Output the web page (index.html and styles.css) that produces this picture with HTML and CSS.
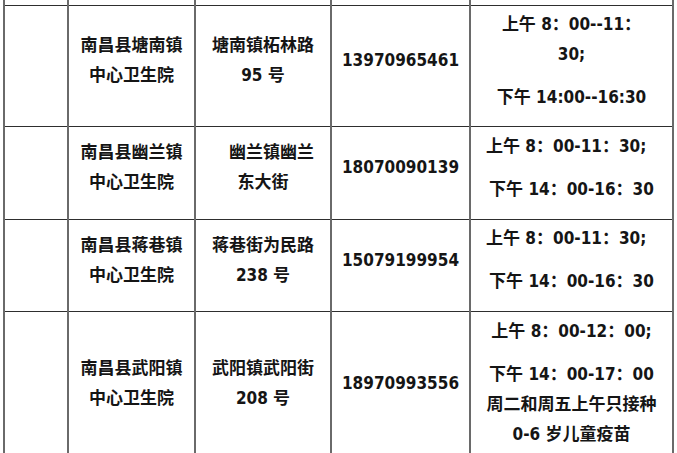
FILE: index.html
```html
<!DOCTYPE html>
<html lang="zh-CN">
<head>
<meta charset="utf-8">
<title>卫生院接种时间</title>
<link rel="stylesheet" href="styles.css">
</head>
<body>
<table class="grid">
  <colgroup>
    <col class="c-no">
    <col class="c-name">
    <col class="c-addr">
    <col class="c-tel">
    <col class="c-time">
  </colgroup>
  <tbody>
    <tr class="row-prev">
      <td></td><td></td><td></td><td></td><td></td>
    </tr>
    <tr class="row-a">
      <td></td>
      <td>南昌县塘南镇<br>中心卫生院</td>
      <td>塘南镇柘林路<br>95 号</td>
      <td>13970965461</td>
      <td>
        <p class="am">上午 8：00--11：<br>30;</p>
        <p>下午 14:00--16:30</p>
      </td>
    </tr>
    <tr class="row-b">
      <td></td>
      <td>南昌县幽兰镇<br>中心卫生院</td>
      <td>　幽兰镇幽兰<br>东大街</td>
      <td>18070090139</td>
      <td>
        <p class="am">上午 8：00-11：30;&nbsp;&nbsp;</p>
        <p>下午 14：00-16：30</p>
      </td>
    </tr>
    <tr class="row-c">
      <td></td>
      <td>南昌县蒋巷镇<br>中心卫生院</td>
      <td>蒋巷街为民路<br>238 号</td>
      <td>15079199954</td>
      <td>
        <p class="am">上午 8：00-11：30;&nbsp;&nbsp;</p>
        <p>下午 14：00-16：30</p>
      </td>
    </tr>
    <tr class="row-d">
      <td></td>
      <td>南昌县武阳镇<br>中心卫生院</td>
      <td>武阳镇武阳街<br>208 号</td>
      <td>18970993556</td>
      <td>
        <p class="am">上午 8：00-12：00;</p>
        <p>下午 14：00-17：00</p>
        <p>周二和周五上午只接种</p>
        <p>0-6 岁儿童疫苗</p>
      </td>
    </tr>
  </tbody>
</table>
</body>
</html>
```

FILE: styles.css
```css
html, body {
  margin: 0;
  padding: 0;
  background: #ffffff;
}

body {
  overflow: hidden;
}

.grid {
  border-collapse: collapse;
  table-layout: fixed;
  width: 669px;
  margin-left: 3px;
  font-family: "DejaVu Sans Condensed", "DejaVu Sans", "Noto Sans CJK SC", sans-serif;
  font-stretch: condensed;
  font-weight: bold;
  font-size: 17px;
  line-height: 30px;
  color: #151515;
}

.c-no { width: 64px; }
.c-name { width: 127px; }
.c-addr { width: 136px; }
.c-tel { width: 139px; }
.c-time { width: 203px; }

.grid td {
  border-top: 1px solid #2e2e2e;
  border-bottom: 1px solid #2e2e2e;
  border-left: 2px solid #6a6a6a;
  border-right: 2px solid #6a6a6a;
  padding: 0 2px 12px;
  text-align: center;
  vertical-align: middle;
  white-space: nowrap;
}

.grid p {
  margin: 0;
}

.grid p.am {
  margin-bottom: 13px;
}

.row-prev td {
  border-top: none;
  padding: 0;
  height: 5px;
}

.row-a td { height: 108px; }
.row-b td { height: 80px; }
.row-c td { height: 79px; }
.row-d td { height: 141px; }
```
